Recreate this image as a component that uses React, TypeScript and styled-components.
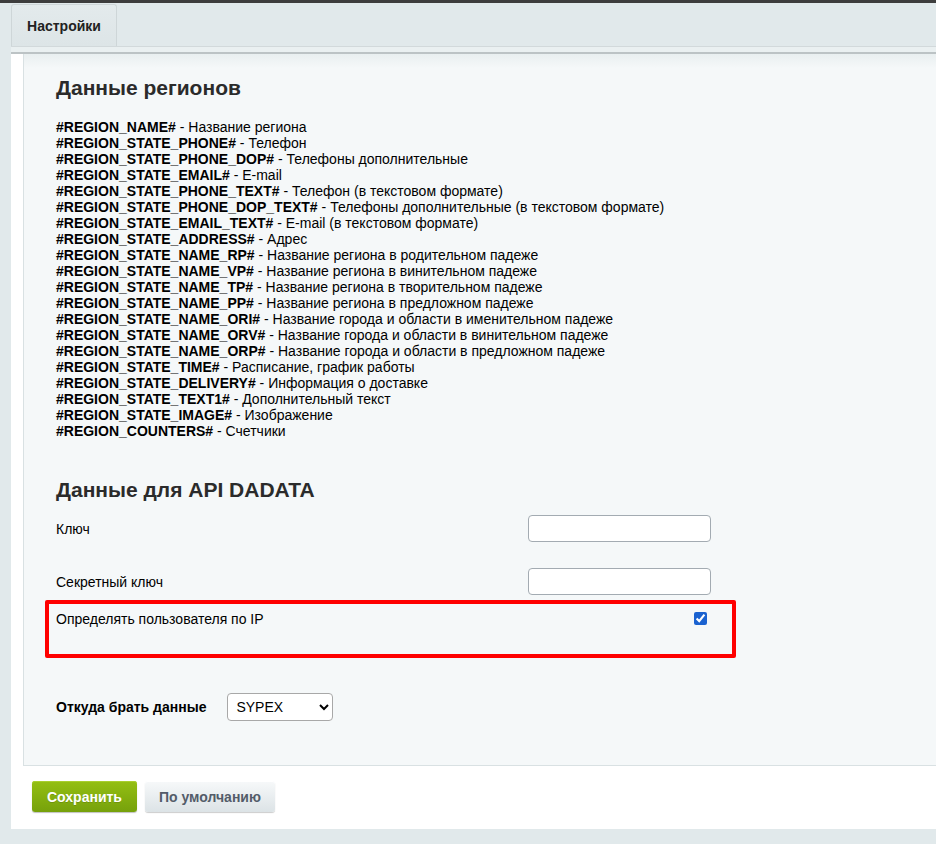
import styled, { createGlobalStyle } from 'styled-components';

const GlobalStyle = createGlobalStyle`
  html, body {
    margin: 0;
    padding: 0;
    background: #e1e9eb;
    font-family: "Liberation Sans", Arial, sans-serif;
  }
`;

const TopLine = styled.div`
  height: 3px;
  background: #3d3d3d;
`;

const Page = styled.div`
  padding: 1px 0 16px 11px;
`;

const TabBar = styled.div`
  display: flex;
  height: 42px;
`;

const Tab = styled.div`
  width: 106px;
  box-sizing: border-box;
  border: 1px solid #ced6d8;
  border-bottom: none;
  border-radius: 3px 3px 0 0;
  background: linear-gradient(#e3eaec, #dde5e7);
  display: flex;
  align-items: center;
  justify-content: center;
  font-size: 14px;
  font-weight: bold;
  color: #222;
`;

const Panel = styled.div`
  background: #fff;
  border-top: 1px solid #d2d9db;
`;

const PanelEdge = styled.div`
  height: 5px;
  background: #eaf0f1;
  border-bottom: 2px solid #bcc3c5;
`;

const PanelBody = styled.div`
  padding-left: 12px;
`;

const Inner = styled.div`
  background: linear-gradient(#e9eff0 0px, #f5f8f9 14px, #f5f8f9 100%);
  border-left: 1px solid #d9e1e3;
  border-bottom: 1px solid #d9e1e3;
  padding: 22px 0 44px 32px;
`;

const Heading = styled.h2<{ $top?: number }>`
  margin: ${(p) => p.$top ?? 0}px 0 0;
  font-size: 21px;
  line-height: 24px;
  font-weight: bold;
  color: #2b2b2b;
`;

const VarList = styled.div`
  margin-top: 19px;
  font-size: 14px;
  line-height: 16px;
  color: #000;
`;

const VarName = styled.b`
  font-weight: bold;
`;

const FormRow = styled.div<{ $gap: number }>`
  display: grid;
  grid-template-columns: 472px 183px;
  align-items: center;
  margin-top: ${(p) => p.$gap}px;
  font-size: 14px;
  color: #000;
`;

const TextInput = styled.input`
  box-sizing: border-box;
  width: 183px;
  height: 27px;
  margin: 0;
  border: 1px solid #a3abb2;
  border-radius: 4px;
  background: #fff;
`;

const Highlight = styled.div`
  margin: 5px 0 0 -11px;
  width: 691px;
  height: 58px;
  box-sizing: border-box;
  border: 4px solid #ff0000;
  border-radius: 2px;
  padding: 7px 25px 0 7px;
  display: flex;
  justify-content: space-between;
  align-items: flex-start;
  font-size: 14px;
  line-height: 16px;
  color: #000;
`;

const Check = styled.input`
  margin: 1px 0 0;
  width: 13px;
  height: 13px;
  accent-color: #1a62d0;
`;

const SourceRow = styled.div`
  display: flex;
  align-items: center;
  gap: 21px;
  margin-top: 35px;
  font-size: 14px;
`;

const SourceLabel = styled.span`
  font-weight: bold;
  color: #000;
`;

const Select = styled.select`
  width: 106px;
  height: 28px;
  border: 1px solid #a8a8a8;
  border-radius: 4px;
  background: #fff;
  font-family: "Liberation Sans", Arial, sans-serif;
  font-size: 14px;
  padding: 0 4px;
  color: #000;
`;

const Footer = styled.div`
  display: flex;
  gap: 8px;
  padding: 15px 0 17px 21px;
`;

const Button = styled.button<{ $primary?: boolean }>`
  height: 31px;
  padding: 0 ${(p) => (p.$primary ? 15 : 14)}px;
  border: none;
  border-radius: 3px;
  font-family: "Liberation Sans", Arial, sans-serif;
  font-size: 14px;
  font-weight: bold;
  cursor: pointer;
  color: ${(p) => (p.$primary ? '#fff' : '#535c69')};
  background: ${(p) =>
    p.$primary
      ? 'linear-gradient(#94bf13, #76a10b)'
      : 'linear-gradient(#f7f9fa, #dce3e6)'};
  box-shadow: ${(p) =>
    p.$primary
      ? '0 1px 1px rgba(0,0,0,0.25), inset 0 1px 0 #a9cf2f'
      : '0 1px 1px rgba(0,0,0,0.2), inset 0 1px 0 #fff'};
  text-shadow: ${(p) => (p.$primary ? '0 1px rgba(0,0,0,0.15)' : 'none')};
`;

const vars: [string, string][] = [
  ['#REGION_NAME#', 'Название региона'],
  ['#REGION_STATE_PHONE#', 'Телефон'],
  ['#REGION_STATE_PHONE_DOP#', 'Телефоны дополнительные'],
  ['#REGION_STATE_EMAIL#', 'E-mail'],
  ['#REGION_STATE_PHONE_TEXT#', 'Телефон (в текстовом формате)'],
  ['#REGION_STATE_PHONE_DOP_TEXT#', 'Телефоны дополнительные (в текстовом формате)'],
  ['#REGION_STATE_EMAIL_TEXT#', 'E-mail (в текстовом формате)'],
  ['#REGION_STATE_ADDRESS#', 'Адрес'],
  ['#REGION_STATE_NAME_RP#', 'Название региона в родительном падеже'],
  ['#REGION_STATE_NAME_VP#', 'Название региона в винительном падеже'],
  ['#REGION_STATE_NAME_TP#', 'Название региона в творительном падеже'],
  ['#REGION_STATE_NAME_PP#', 'Название региона в предложном падеже'],
  ['#REGION_STATE_NAME_ORI#', 'Название города и области в именительном падеже'],
  ['#REGION_STATE_NAME_ORV#', 'Название города и области в винительном падеже'],
  ['#REGION_STATE_NAME_ORP#', 'Название города и области в предложном падеже'],
  ['#REGION_STATE_TIME#', 'Расписание, график работы'],
  ['#REGION_STATE_DELIVERY#', 'Информация о доставке'],
  ['#REGION_STATE_TEXT1#', 'Дополнительный текст'],
  ['#REGION_STATE_IMAGE#', 'Изображение'],
  ['#REGION_COUNTERS#', 'Счетчики'],
];

export default function App() {
  return (
    <>
      <GlobalStyle />
      <TopLine />
      <Page>
        <TabBar>
          <Tab>Настройки</Tab>
        </TabBar>
        <Panel>
          <PanelEdge />
          <PanelBody>
            <Inner>
              <Heading>Данные регионов</Heading>
              <VarList>
                {vars.map(([name, desc]) => (
                  <div key={name}>
                    <VarName>{name}</VarName> - {desc}
                  </div>
                ))}
              </VarList>

              <Heading $top={39}>Данные для API DADATA</Heading>
              <FormRow $gap={13}>
                <span>Ключ</span>
                <TextInput type="text" />
              </FormRow>
              <FormRow $gap={26}>
                <span>Секретный ключ</span>
                <TextInput type="text" />
              </FormRow>
              <Highlight>
                <span>Определять пользователя по IP</span>
                <Check type="checkbox" defaultChecked />
              </Highlight>

              <SourceRow>
                <SourceLabel>Откуда брать данные</SourceLabel>
                <Select defaultValue="sypex">
                  <option value="sypex">SYPEX</option>
                  <option value="dadata">DADATA</option>
                </Select>
              </SourceRow>
            </Inner>
          </PanelBody>
          <Footer>
            <Button $primary>Сохранить</Button>
            <Button>По умолчанию</Button>
          </Footer>
        </Panel>
      </Page>
    </>
  );
}
